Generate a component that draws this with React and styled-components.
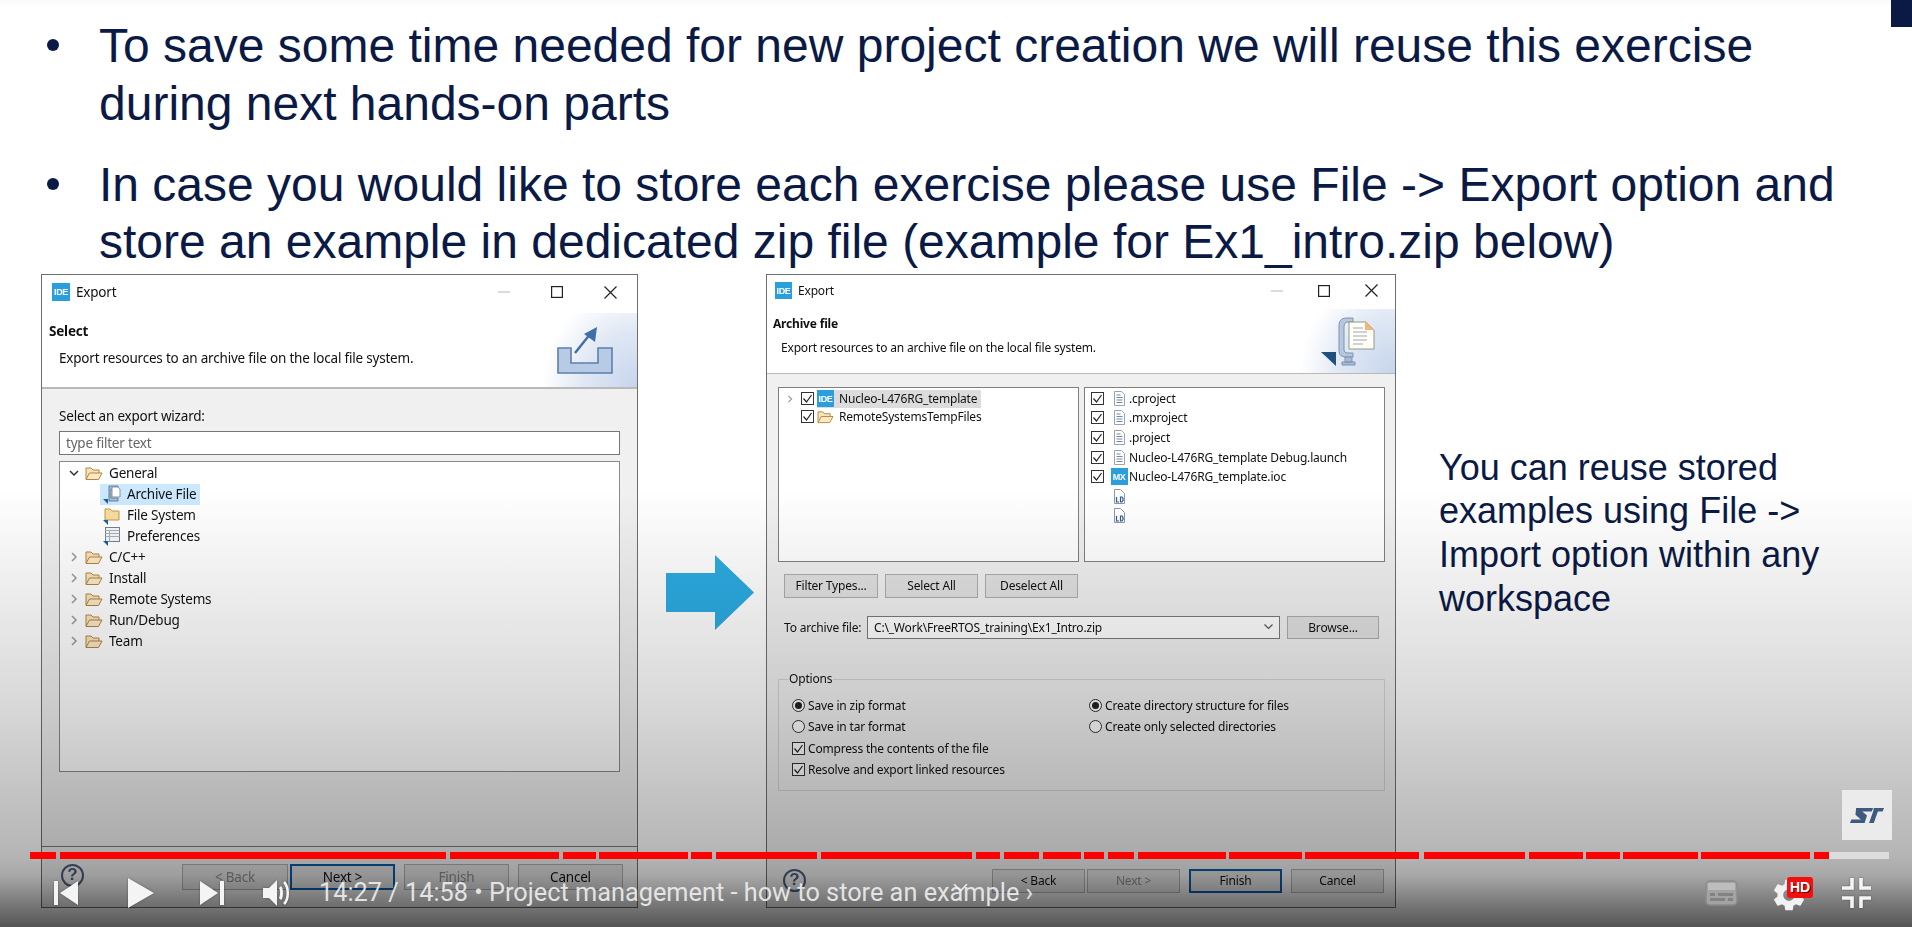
import React from "react";
import styled, { createGlobalStyle } from "styled-components";

const GlobalStyle = createGlobalStyle`
  html, body { margin: 0; padding: 0; background: #fff; }
  * { box-sizing: border-box; }
`;

const UI_FONT = `"Noto Sans", "Open Sans", sans-serif`;

// chapter marks of the player, start and end x of every red piece
const CHAPTERS = [
  [30, 56], [60, 446], [450, 559], [563, 596], [599, 688], [691, 712], [716, 817],
  [821, 972], [976, 1000], [1004, 1039], [1043, 1081], [1084, 1104], [1108, 1134],
  [1138, 1226], [1229, 1302], [1305, 1419], [1424, 1525], [1529, 1583], [1586, 1620],
  [1623, 1698], [1701, 1810], [1814, 1829],
];

const Page = styled.div`
  position: relative;
  width: 1912px;
  height: 927px;
  overflow: hidden;
  background: #fff;
`;

const CornerMark = styled.div`
  position: absolute;
  top: 0;
  right: 0;
  width: 21px;
  height: 27px;
  background: #0b1a45;
`;

const BulletList = styled.ul`
  list-style: none;
  margin: 0;
  padding: 17px 0 0 47px;
  display: flex;
  flex-direction: column;
  gap: 23.5px;
`;

const Bullet = styled.li`
  display: flex;
  align-items: flex-start;
`;

const Dot = styled.span`
  flex: none;
  width: 12px;
  height: 12px;
  margin: 22px 40px 0 0;
  border-radius: 50%;
  background: #0b1a45;
`;

const BulletText = styled.div`
  font-family: "Liberation Sans", Arial, sans-serif;
  font-size: 48px;
  line-height: 57.5px;
  color: #0b1a45;
  white-space: nowrap;
`;

const SlideRow = styled.div`
  display: flex;
  align-items: flex-start;
  margin-top: 3px;
  padding-left: 41px;
`;

const Dialog = styled.section`
  flex: none;
  display: flex;
  flex-direction: column;
  width: ${(p) => p.$width}px;
  height: 634px;
  border: 1px solid #6e6e6e;
  background: #f0f0f0;
  color: #111;
  font-family: ${UI_FONT};
  font-size: ${(p) => p.$font}px;
  letter-spacing: ${(p) => p.$spacing}px;
  filter: blur(0.3px);
`;

const TitleBar = styled.div`
  flex: none;
  display: flex;
  align-items: center;
  height: ${(p) => p.$height}px;
  padding: 0 ${(p) => p.$right}px ${(p) => p.$lift}px ${(p) => p.$left}px;
  background: #fff;
`;

const Badge = styled.span`
  flex: none;
  display: inline-flex;
  align-items: center;
  justify-content: center;
  width: ${(p) => p.$size || 18}px;
  height: ${(p) => p.$size || 18}px;
  background: #2a9fdc;
  color: #fff;
  font-family: "Liberation Sans", sans-serif;
  font-size: 9px;
  font-weight: 700;
  letter-spacing: -0.4px;
`;

const TitleText = styled.span`
  margin-left: 6px;
`;

const WindowButtons = styled.div`
  margin-left: auto;
  display: flex;
  align-items: center;
  gap: ${(p) => p.$gap}px;
`;

const Banner = styled.header`
  flex: none;
  display: flex;
  height: ${(p) => p.$height}px;
  padding-left: ${(p) => p.$left}px;
  background-color: #fff;
  background-image: radial-gradient(ellipse 95px 100px at 100% 100%, #c6d5ec 0%, #dfe7f4 55%, rgba(255, 255, 255, 0) 100%);
  border-bottom: ${(p) => p.$rule}px solid #b9b9b9;
`;

const BannerHead = styled.h2`
  margin: 0;
  font-size: inherit;
  font-weight: 700;
  line-height: 18px;
`;

const BannerText = styled.p`
  margin: ${(p) => p.$top}px 0 0 ${(p) => p.$left}px;
  line-height: 18px;
`;

const BannerCopy = styled.div`
  padding-top: ${(p) => p.$top}px;
`;

const BannerIcon = styled.svg`
  flex: none;
  margin: ${(p) => p.$top}px ${(p) => p.$right}px 0 auto;
`;

const WizardBody = styled.div`
  flex: 1;
  display: flex;
  flex-direction: column;
  padding: 18px 17px 0;
`;

const FieldLabel = styled.label`
  line-height: 18px;
`;

const FilterInput = styled.div`
  height: 24px;
  margin-top: 6px;
  padding-left: 6px;
  border: 1px solid #777;
  background: #fff;
  color: #666;
  line-height: 22px;
`;

const Tree = styled.div`
  height: 311px;
  margin-top: 6px;
  padding-top: 1px;
  border: 1px solid #8a8a8a;
  background: #fff;
`;

const TreeRow = styled.div`
  display: flex;
  align-items: center;
  height: 21px;
  padding-left: ${(p) => (p.$child ? 43 : 9)}px;
`;

const ChevronBox = styled.svg`
  flex: none;
  margin-right: 6px;
`;

const TreeItem = styled.span`
  display: inline-flex;
  align-items: center;
  gap: 6px;
  height: 21px;
  margin-left: ${(p) => (p.$selected ? -3 : 0)}px;
  padding: 0 ${(p) => (p.$selected ? 4 : 0)}px 0 ${(p) => (p.$selected ? 3 : 0)}px;
  background: ${(p) => (p.$selected ? "#cce8ff" : "transparent")};
`;

const Footer = styled.footer`
  margin-top: auto;
  flex: none;
  display: flex;
  align-items: flex-start;
  height: ${(p) => p.$height}px;
  padding: ${(p) => p.$top}px ${(p) => p.$right}px 0 ${(p) => p.$left}px;
  border-top: ${(p) => (p.$rule ? "1px solid #7c7c7c" : "none")};
`;

const HelpIcon = styled.span`
  flex: none;
  display: flex;
  align-items: center;
  justify-content: center;
  width: 23px;
  height: 23px;
  border: 2px solid #4a5c7e;
  border-radius: 50%;
  color: #4a5c7e;
  font-family: "Liberation Sans", sans-serif;
  font-size: 17px;
  font-weight: 700;
  letter-spacing: 0;
`;

const ButtonRow = styled.div`
  margin-left: auto;
  display: flex;
  gap: ${(p) => p.$gap}px;
`;

const WizardButton = styled.button`
  width: ${(p) => p.$width}px;
  height: ${(p) => p.$height}px;
  margin-right: ${(p) => p.$pull || 0}px;
  padding: 0;
  background: #e1e1e1;
  border: ${(p) => (p.$primary ? "2px solid #0a5aa8" : "1px solid #adadad")};
  color: ${(p) => (p.$off ? "#8a8a8a" : "#111")};
  font: inherit;
  letter-spacing: inherit;
`;

const ListsRow = styled.div`
  display: flex;
  gap: 5px;
  margin-top: 13px;
`;

const ListBox = styled.div`
  width: 301px;
  height: 175px;
  padding: ${(p) => p.$top}px 0 0 ${(p) => p.$left}px;
  border: 1px solid #7f7f7f;
  background: #fff;
`;

const CheckRow = styled.div`
  display: flex;
  align-items: center;
  height: ${(p) => p.$height}px;
`;

const Check = styled.svg`
  flex: none;
  margin-left: ${(p) => p.$left || 0}px;
`;

const CheckSpacer = styled.span`
  flex: none;
  width: 13px;
`;

const ProjectItem = styled.span`
  display: inline-flex;
  align-items: center;
  gap: 5px;
  height: 18px;
  margin-left: 3px;
  padding-right: 4px;
  background: ${(p) => (p.$selected ? "#dcdcdc" : "transparent")};
`;

const FileSlot = styled.span`
  flex: none;
  display: flex;
  align-items: center;
  justify-content: center;
  width: 20px;
  margin: 0 0 0 5px;
`;

const ArchiveButtons = styled.div`
  display: flex;
  gap: 7px;
  margin: 12px 0 0 6px;
`;

const ArchiveRow = styled.div`
  display: flex;
  align-items: center;
  gap: 7px;
  margin: 18px 6px 0;
`;

const ArchiveLabel = styled.label`
  width: 76px;
  white-space: nowrap;
`;

const Combo = styled.div`
  flex: 1;
  display: flex;
  align-items: center;
  justify-content: space-between;
  height: 23px;
  padding: 0 6px;
  border: 1px solid #7a7a7a;
  background: #fff;
`;

const ArchiveBody = styled.div`
  padding: 0 10px 0 11px;
`;

const OptionsGroup = styled.div`
  position: relative;
  display: flex;
  height: 112px;
  margin-top: 40px;
  padding: 15px 0 0 13px;
  border: 1px solid #d4d4d4;
`;

const OptionsTitle = styled.span`
  position: absolute;
  top: -9px;
  left: 9px;
  padding: 0 1px;
  background: #f0f0f0;
  line-height: 16px;
`;

const OptionColumn = styled.div`
  flex: none;
  width: ${(p) => p.$width}px;
`;

const Option = styled.div`
  display: flex;
  align-items: center;
  gap: 3px;
  height: 21.5px;
  white-space: nowrap;
`;

const Radio = styled.span`
  flex: none;
  display: flex;
  align-items: center;
  justify-content: center;
  width: 13px;
  height: 13px;
  border: 1px solid #333;
  border-radius: 50%;
  background: #fff;

  &::after {
    content: "";
    width: 7px;
    height: 7px;
    border-radius: 50%;
    background: ${(p) => (p.$on ? "#222" : "transparent")};
  }
`;

const ArrowIcon = styled.svg`
  flex: none;
  margin: 281px 12px 0 28px;
`;

const Note = styled.p`
  flex: none;
  margin: 172px 0 0 43px;
  font-family: "Liberation Sans", Arial, sans-serif;
  font-size: 36px;
  line-height: 43.7px;
  color: #0b1a45;
  white-space: nowrap;
`;

const Shade = styled.div`
  position: absolute;
  inset: 0;
  background: linear-gradient(
    to bottom,
    rgba(0, 0, 0, 0.02) 0,
    rgba(0, 0, 0, 0) 8px,
    rgba(0, 0, 0, 0) 490px,
    rgba(0, 0, 0, 0.15) 700px,
    rgba(0, 0, 0, 0.29) 855px,
    rgba(0, 0, 0, 0.34) 875px,
    rgba(0, 0, 0, 0.5) 900px,
    rgba(0, 0, 0, 0.67) 927px
  );
`;

const LogoBox = styled.div`
  position: absolute;
  top: 790px;
  left: 1842px;
  display: flex;
  align-items: center;
  justify-content: center;
  width: 50px;
  height: 50px;
  background: #ebebeb;
`;

const Progress = styled.div`
  position: absolute;
  top: 852px;
  left: 30px;
  display: flex;
  height: 7px;
`;

const ProgressPiece = styled.span`
  flex: none;
  height: 7px;
  background: ${(p) => (p.$rest ? "#dddddd" : "#ff0000")};
`;

const PlayerBar = styled.div`
  position: absolute;
  top: 878px;
  left: 0;
  right: 0;
  display: flex;
  align-items: center;
  height: 30px;
  padding: 0 40px 0 54px;
`;

const PlayerIcon = styled.svg`
  flex: none;
  margin-left: ${(p) => p.$left || 0}px;
  filter: drop-shadow(0 0 1px rgba(0, 0, 0, 0.35));
`;

const PlayerTitle = styled.span`
  flex: none;
  margin-left: 28px;
  font-family: Roboto, sans-serif;
  font-size: 25.3px;
  line-height: 30px;
  color: rgba(238, 238, 238, 0.92);
  white-space: nowrap;
`;

const RightControls = styled.div`
  margin-left: auto;
  display: flex;
  align-items: center;
`;

const GearWrap = styled.div`
  position: relative;
  flex: none;
  width: 28px;
  height: 28px;
  margin: 0 40px 0 35px;
`;

const HdBadge = styled.span`
  position: absolute;
  top: -2px;
  left: 14px;
  width: 26px;
  height: 21px;
  border-radius: 3px;
  background: #f40f0f;
  color: #fff;
  font-family: "Liberation Sans", sans-serif;
  font-size: 14px;
  font-weight: 700;
  line-height: 21px;
  text-align: center;
  text-shadow: 1px 1px 0 rgba(60, 0, 0, 0.8);
`;

const DownMark = styled.svg`
  position: absolute;
  top: 884px;
  left: 953px;
`;

const IdeBadge = ({ size }) => <Badge $size={size}>IDE</Badge>;

const WinMin = () => (
  <svg width="12" height="12" viewBox="0 0 12 12">
    <path d="M0 6h12" stroke="#c4c4c4" strokeWidth="1.2" />
  </svg>
);
const WinMax = () => (
  <svg width="12" height="12" viewBox="0 0 12 12">
    <rect x="0.6" y="0.6" width="10.8" height="10.8" fill="none" stroke="#222" strokeWidth="1.2" />
  </svg>
);
const WinClose = () => (
  <svg width="13" height="13" viewBox="0 0 13 13">
    <path d="M.5.5l12 12M12.5.5l-12 12" stroke="#222" strokeWidth="1.2" />
  </svg>
);

const Chevron = ({ open, w = 10 }) => (
  <ChevronBox width={w} height="10" viewBox="0 0 10 10">
    <path
      d={open ? "M1 3l4 4 4-4" : "M3 1l4 4-4 4"}
      fill="none"
      stroke={open ? "#333" : "#9a9a9a"}
      strokeWidth="1.5"
    />
  </ChevronBox>
);

const FolderOpen = ({ w = 18, h = 16 }) => (
  <svg width={w} height={h} viewBox="0 0 18 16">
    <path d="M1 14V3h5l2 2h6v3" fill="#f8e3bf" stroke="#b5853a" />
    <path d="M1 14.5L4.5 8H17l-3.5 6.5z" fill="#fbe9c8" stroke="#b5853a" />
  </svg>
);

const ArchiveGlyph = () => (
  <svg width="18" height="20" viewBox="0 0 18 20">
    <path d="M6 2h9v3H8v9h7v3H6z" fill="#a9bdd6" stroke="#5f7da3" />
    <path d="M9 3h6l2 2v8H9z" fill="#fff" stroke="#8793a2" />
    <path d="M0 15h5v5z" fill="#1f5f9f" />
  </svg>
);

const FolderGlyph = () => (
  <svg width="18" height="20" viewBox="0 0 18 20">
    <path d="M2 4h5l2 2h7v9H2z" fill="#f9dc9f" stroke="#c49a45" />
    <path d="M0 15h5v5z" fill="#1f5f9f" />
  </svg>
);

const PrefsGlyph = () => (
  <svg width="18" height="20" viewBox="0 0 18 20">
    <rect x="2.5" y="1.5" width="14" height="14" fill="#f5f7fa" stroke="#77818d" />
    <path d="M2.5 4.5h14M2.5 7.5h14M2.5 10.5h14M6.5 4.5v11" stroke="#a6b0bc" fill="none" />
    <path d="M0 15h5v5z" fill="#1f5f9f" />
  </svg>
);

const CheckBox = ({ left }) => (
  <Check $left={left} width="13" height="13" viewBox="0 0 13 13">
    <rect x="0.5" y="0.5" width="12" height="12" fill="#fff" stroke="#333" />
    <path d="M2.5 6.5l3 3.5 5-7" fill="none" stroke="#222" strokeWidth="1.2" />
  </Check>
);

const DocGlyph = () => (
  <svg width="11" height="15" viewBox="0 0 11 15">
    <path d="M.5.5h7l3 3v11H.5z" fill="#fff" stroke="#9aa3ad" />
    <path d="M2.5 4h4M2.5 6.5h6M2.5 9h6M2.5 11.5h6" stroke="#6f87a6" />
  </svg>
);

const LdGlyph = () => (
  <svg width="11" height="15" viewBox="0 0 11 15">
    <path d="M.5.5h6l4 4v10H.5z" fill="#fff" stroke="#8c98a6" />
    <path d="M2.5 8v5h2.5M6.5 8v5h1.5l1-1.5v-2L8 8z" fill="none" stroke="#2c5a8c" strokeWidth="1.2" />
  </svg>
);

const SelectWizardDialog = () => (
  <Dialog $width={597} $font={13.5} $spacing={-0.2}>
    <TitleBar $height={38} $left={10} $right={20} $lift={3}>
      <IdeBadge />
      <TitleText>Export</TitleText>
      <WindowButtons $gap={41}>
        <WinMin />
        <WinMax />
        <WinClose />
      </WindowButtons>
    </TitleBar>
    <Banner $height={76} $left={7} $rule={2}>
      <BannerCopy $top={9}>
        <BannerHead>Select</BannerHead>
        <BannerText $top={9} $left={10}>
          Export resources to an archive file on the local file system.
        </BannerText>
      </BannerCopy>
      <BannerIcon $top={14} $right={24} width="56" height="47" viewBox="0 0 56 47">
        <path d="M1 21h13v15h27V21h14v25H1z" fill="#b8cbe4" stroke="#5c7fae" strokeWidth="1.6" />
        <path d="M18 26L34 6" stroke="#3f6ea8" strokeWidth="2.4" />
        <path d="M40 0l-2 15-11-8z" fill="#3f6ea8" />
      </BannerIcon>
    </Banner>
    <WizardBody>
      <FieldLabel>Select an export wizard:</FieldLabel>
      <FilterInput>type filter text</FilterInput>
      <Tree>
        <TreeRow>
          <Chevron open />
          <TreeItem>
            <FolderOpen />
            General
          </TreeItem>
        </TreeRow>
        <TreeRow $child>
          <TreeItem $selected>
            <ArchiveGlyph />
            Archive File
          </TreeItem>
        </TreeRow>
        <TreeRow $child>
          <TreeItem>
            <FolderGlyph />
            File System
          </TreeItem>
        </TreeRow>
        <TreeRow $child>
          <TreeItem>
            <PrefsGlyph />
            Preferences
          </TreeItem>
        </TreeRow>
        {["C/C++", "Install", "Remote Systems", "Run/Debug", "Team"].map((name) => (
          <TreeRow key={name}>
            <Chevron />
            <TreeItem>
              <FolderOpen />
              {name}
            </TreeItem>
          </TreeRow>
        ))}
      </Tree>
    </WizardBody>
    <Footer $height={61} $top={17} $left={19} $right={14} $rule>
      <HelpIcon>?</HelpIcon>
      <ButtonRow $gap={9}>
        <WizardButton $width={106} $height={26} $pull={-7} $off>
          &lt; Back
        </WizardButton>
        <WizardButton $width={105} $height={26} $primary>
          Next &gt;
        </WizardButton>
        <WizardButton $width={105} $height={26} $off>
          Finish
        </WizardButton>
        <WizardButton $width={105} $height={26}>
          Cancel
        </WizardButton>
      </ButtonRow>
    </Footer>
  </Dialog>
);

const ArchiveFileDialog = () => (
  <Dialog $width={630} $font={12} $spacing={-0.18}>
    <TitleBar $height={34} $left={8} $right={17} $lift={2}>
      <IdeBadge size={17} />
      <TitleText>Export</TitleText>
      <WindowButtons $gap={35}>
        <WinMin />
        <WinMax />
        <WinClose />
      </WindowButtons>
    </TitleBar>
    <Banner $height={65} $left={6} $rule={1}>
      <BannerCopy $top={6}>
        <BannerHead>Archive file</BannerHead>
        <BannerText $top={6} $left={8}>
          Export resources to an archive file on the local file system.
        </BannerText>
      </BannerCopy>
      <BannerIcon $top={7} $right={16} width="58" height="50" viewBox="0 0 58 50">
        <path d="M0 36h15v14z" fill="#1f5080" />
        <path d="M32 2h-6c-6 0-8 3-8 8v24c0 5 2 7 8 7h6v-4h-5c-3 0-4-1-4-4V11c0-3 1-5 4-5h5z" fill="#b7c8de" stroke="#7c93b2" />
        <path d="M24 41h7v5h-7zM21 46h13v3H21z" fill="#a9bad2" stroke="#7c93b2" />
        <path d="M28 6h17l8 8v19H28z" fill="#fffdf5" stroke="#8c9a8a" />
        <path d="M44 5l9 9h-9z" fill="#f2b57a" />
        <path d="M32 12h10M32 16h14M32 20h14M32 24h14M32 28h10" stroke="#9ca7b5" />
      </BannerIcon>
    </Banner>
    <ArchiveBody>
      <ListsRow>
        <ListBox $top={2} $left={7}>
          <CheckRow $height={18}>
            <Chevron w={8} />
            <CheckBox left={1} />
            <ProjectItem $selected>
              <IdeBadge size={17} />
              Nucleo-L476RG_template
            </ProjectItem>
          </CheckRow>
          <CheckRow $height={18}>
            <CheckBox left={15} />
            <ProjectItem>
              <FolderOpen w={17} h={15} />
              RemoteSystemsTempFiles
            </ProjectItem>
          </CheckRow>
        </ListBox>
        <ListBox $top={1} $left={6}>
          {[".cproject", ".mxproject", ".project", "Nucleo-L476RG_template Debug.launch"].map((name) => (
            <CheckRow key={name} $height={19.6}>
              <CheckBox />
              <FileSlot>
                <DocGlyph />
              </FileSlot>
              {name}
            </CheckRow>
          ))}
          <CheckRow $height={19.6}>
            <CheckBox />
            <FileSlot>
              <Badge $size={17}>MX</Badge>
            </FileSlot>
            Nucleo-L476RG_template.ioc
          </CheckRow>
          <CheckRow $height={19.6}>
            <CheckSpacer />
            <FileSlot>
              <LdGlyph />
            </FileSlot>
          </CheckRow>
          <CheckRow $height={19.6}>
            <CheckSpacer />
            <FileSlot>
              <LdGlyph />
            </FileSlot>
          </CheckRow>
        </ListBox>
      </ListsRow>
      <ArchiveButtons>
        <WizardButton $width={94} $height={24}>Filter Types...</WizardButton>
        <WizardButton $width={93} $height={24}>Select All</WizardButton>
        <WizardButton $width={93} $height={24}>Deselect All</WizardButton>
      </ArchiveButtons>
      <ArchiveRow>
        <ArchiveLabel>To archive file:</ArchiveLabel>
        <Combo>
          C:\_Work\FreeRTOS_training\Ex1_Intro.zip
          <svg width="9" height="6" viewBox="0 0 9 6">
            <path d="M.5.5l4 4 4-4" fill="none" stroke="#555" strokeWidth="1.2" />
          </svg>
        </Combo>
        <WizardButton $width={92} $height={23}>Browse...</WizardButton>
      </ArchiveRow>
      <OptionsGroup>
        <OptionsTitle>Options</OptionsTitle>
        <OptionColumn $width={297}>
          <Option>
            <Radio $on />
            Save in zip format
          </Option>
          <Option>
            <Radio />
            Save in tar format
          </Option>
          <Option>
            <CheckBox />
            Compress the contents of the file
          </Option>
          <Option>
            <CheckBox />
            Resolve and export linked resources
          </Option>
        </OptionColumn>
        <OptionColumn $width={280}>
          <Option>
            <Radio $on />
            Create directory structure for files
          </Option>
          <Option>
            <Radio />
            Create only selected directories
          </Option>
        </OptionColumn>
      </OptionsGroup>
    </ArchiveBody>
    <Footer $height={38} $top={0} $left={16} $right={11}>
      <HelpIcon>?</HelpIcon>
      <ButtonRow $gap={9}>
        <WizardButton $width={93} $height={24} $pull={-7}>
          &lt; Back
        </WizardButton>
        <WizardButton $width={93} $height={24} $off>
          Next &gt;
        </WizardButton>
        <WizardButton $width={93} $height={24} $primary>
          Finish
        </WizardButton>
        <WizardButton $width={93} $height={24}>
          Cancel
        </WizardButton>
      </ButtonRow>
    </Footer>
  </Dialog>
);

const ProgressBar = () => (
  <Progress>
    {CHAPTERS.map(([from, to], i) => (
      <ProgressPiece
        key={from}
        style={{ width: to - from, marginLeft: i ? from - CHAPTERS[i - 1][1] : 0 }}
      />
    ))}
    <ProgressPiece $rest style={{ width: 60 }} />
  </Progress>
);

const Controls = () => (
  <PlayerBar>
    <PlayerIcon width="24" height="24" viewBox="0 0 24 24" fill="#f4f4f4">
      <path d="M0 0h4v24H0zM24 0v24L6 12z" />
    </PlayerIcon>
    <PlayerIcon $left={50} width="26" height="30" viewBox="0 0 26 30" fill="#f4f4f4">
      <path d="M0 0l26 15L0 30z" />
    </PlayerIcon>
    <PlayerIcon $left={46} width="24" height="24" viewBox="0 0 24 24" fill="#f4f4f4">
      <path d="M0 0l18 12L0 24zM20 0h4v24h-4z" />
    </PlayerIcon>
    <PlayerIcon $left={39} width="28" height="26" viewBox="0 0 28 26">
      <path d="M0 8h6l8-8v26l-8-8H0z" fill="#f4f4f4" />
      <path d="M17 7c2 2 2 10 0 12" fill="none" stroke="#f4f4f4" strokeWidth="3" />
      <path d="M21 2c5 5 5 17 0 22" fill="none" stroke="#f4f4f4" strokeWidth="2.6" />
    </PlayerIcon>
    <PlayerTitle>14:27 / 14:58 • Project management - how to store an example ›</PlayerTitle>
    <RightControls>
      <svg width="33" height="26" viewBox="0 0 33 26">
        <rect x="1" y="1" width="31" height="24" rx="4" fill="#a3a3a3" stroke="#8b8b8b" strokeWidth="1.5" />
        <path d="M3 3h27v7H3z" fill="#bdbdbd" />
        <path d="M5 13h5v3H5zM13 13h15v3H13zM5 18h15v3H5zM23 18h5v3h-5z" fill="#828282" />
      </svg>
      <GearWrap>
        <svg width="32" height="32" viewBox="2 2 20 20" fill="#f2f2f2">
          <path d="M19.14 12.94c.04-.3.06-.61.06-.94 0-.32-.02-.64-.07-.94l2.03-1.58c.18-.14.23-.41.12-.61l-1.92-3.32c-.12-.22-.37-.29-.59-.22l-2.39.96c-.5-.38-1.03-.7-1.62-.94l-.36-2.54c-.04-.24-.24-.41-.48-.41h-3.84c-.24 0-.43.17-.47.41l-.36 2.54c-.59.24-1.13.57-1.62.94l-2.39-.96c-.22-.08-.47 0-.59.22L2.74 8.87c-.12.21-.08.47.12.61l2.03 1.58c-.05.3-.09.63-.09.94s.02.64.07.94l-2.03 1.58c-.18.14-.23.41-.12.61l1.92 3.32c.12.22.37.29.59.22l2.39-.96c.5.38 1.03.7 1.62.94l.36 2.54c.05.24.24.41.48.41h3.84c.24 0 .44-.17.47-.41l.36-2.54c.59-.24 1.13-.56 1.62-.94l2.39.96c.22.08.47 0 .59-.22l1.92-3.32c.12-.22.07-.47-.12-.61l-2.01-1.58zM12 15.6c-1.98 0-3.6-1.62-3.6-3.6s1.62-3.6 3.6-3.6 3.6 1.62 3.6 3.6-1.62 3.6-3.6 3.6z" />
        </svg>
        <HdBadge>HD</HdBadge>
      </GearWrap>
      <PlayerIcon width="31" height="30" viewBox="0 0 31 30" fill="none" stroke="#f4f4f4" strokeWidth="3.6">
        <path d="M1 10h10V0M30 10H20V0M1 20h10v10M30 20H20v10" />
      </PlayerIcon>
    </RightControls>
  </PlayerBar>
);

export default function App() {
  return (
    <Page>
      <GlobalStyle />
      <BulletList>
        <Bullet>
          <Dot />
          <BulletText>
            To save some time needed for new project creation we will reuse this exercise
            <br />
            during next hands-on parts
          </BulletText>
        </Bullet>
        <Bullet>
          <Dot />
          <BulletText>
            In case you would like to store each exercise please use File -&gt; Export option and
            <br />
            store an example in dedicated zip file (example for Ex1_intro.zip below)
          </BulletText>
        </Bullet>
      </BulletList>
      <SlideRow>
        <SelectWizardDialog />
        <ArrowIcon width="88" height="75" viewBox="0 0 88 75">
          <path d="M0 18h49V0l39 37.5L49 75V57H0z" fill="#2cabe2" />
        </ArrowIcon>
        <ArchiveFileDialog />
        <Note>
          You can reuse stored
          <br />
          examples using File -&gt;
          <br />
          Import option within any
          <br />
          workspace
        </Note>
      </SlideRow>
      <CornerMark />
      <Shade />
      <LogoBox>
        <svg width="34" height="15" viewBox="0 0 100 44" fill="#3f5a7f">
          <path d="M18 0h50l-4 10H36l14 12-7 22H0l4-10h28L16 20z" />
          <path d="M70 0h30l-4 10H82L70 44H56l12-34z" />
        </svg>
      </LogoBox>
      <ProgressBar />
      <Controls />
      <DownMark width="15" height="8" viewBox="0 0 15 8">
        <path d="M1 0l6.5 7L14 0" fill="none" stroke="#f0f0f0" strokeWidth="1.5" />
      </DownMark>
    </Page>
  );
}
